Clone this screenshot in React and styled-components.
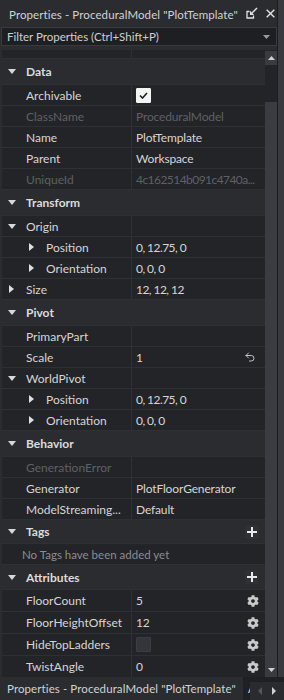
import React from 'react';
import styled, { createGlobalStyle } from 'styled-components';
import { FaCog } from 'react-icons/fa';
import { Undo2 } from 'lucide-react';

const C = {
  strip: '#393a3f',
  frame: '#2b2c30',
  edge: '#1b1c1f',
  rowBg: '#232428',
  headBg: '#2b2c30',
  sep: '#2f3035',
  text: '#d6d6d6',
  dim: '#5f6065',
  note: '#8c8d91',
};

const GlobalStyle = createGlobalStyle`
  html, body { margin: 0; padding: 0; background: ${C.strip}; }
  body {
    font-family: Lato, "Liberation Sans", sans-serif;
    font-size: 12px;
    color: ${C.text};
  }
  #root { width: 284px; height: 700px; }
`;

const Page = styled.div`
  width: 284px;
  height: 700px;
  display: flex;
  flex-direction: column;
  overflow: hidden;
`;

const Top = styled.div`
  flex: 1;
  display: flex;
  min-height: 0;
`;

const Window = styled.div`
  width: 278px;
  box-sizing: border-box;
  border-right: 1px solid ${C.edge};
  background: ${C.frame};
  display: flex;
  flex-direction: column;
`;

const TitleBar = styled.div`
  height: 26px;
  display: flex;
  align-items: center;
  padding: 0 7px 0 9px;
  gap: 8px;
`;

const TitleText = styled.div`
  flex: 1;
  white-space: nowrap;
  color: #d2d2d2;
  font-size: 11.5px;
  letter-spacing: 0.1px;
  padding-top: 2px;
`;

const IconBtn = styled.div`
  display: flex;
  align-items: center;
  justify-content: center;
  width: ${p => p.$w || 12}px;
  height: 12px;
  color: #e2e2e2;
`;

const FilterWrap = styled.div`
  padding: 1px 0 4px 1px;
`;

const FilterBox = styled.div`
  height: 19px;
  box-sizing: border-box;
  border: 1px solid #393a3f;
  background: #1e1f23;
  display: flex;
  align-items: center;
  padding: 0 6px 0 5px;
  color: #cfcfcf;
  font-size: 11.5px;
`;

const FilterText = styled.div`
  flex: 1;
`;

const Body = styled.div`
  flex: 1;
  display: flex;
  min-height: 0;
`;

const List = styled.div`
  flex: 1;
  padding-left: 2px;
  display: flex;
  flex-direction: column;
  overflow: hidden;
`;

const Stub = styled.div`
  height: 9px;
  flex: none;
  display: grid;
  grid-template-columns: 130px 1fr;
  background: ${C.rowBg};
  border-bottom: 1px solid ${C.sep};
  box-sizing: border-box;
  & > div:first-child { border-right: 1px solid ${C.sep}; }
`;

const HeadRow = styled.div`
  height: ${p => p.$h || 26}px;
  flex: none;
  box-sizing: border-box;
  display: flex;
  align-items: center;
  background: ${C.headBg};
  border-bottom: 1px solid ${C.sep};
  font-weight: 700;
  color: #dcdcdc;
  padding-right: 6px;
`;

const HeadLabel = styled.div`
  flex: 1;
`;

const PropRow = styled.div`
  height: ${p => p.$h || 21}px;
  flex: none;
  box-sizing: border-box;
  display: grid;
  grid-template-columns: 130px 1fr;
  background: ${C.rowBg};
  border-bottom: 1px solid ${C.sep};
`;

const NameCell = styled.div`
  display: flex;
  align-items: center;
  padding-left: ${p => p.$depth * 20}px;
  border-right: 1px solid ${C.sep};
  color: ${p => (p.$disabled ? C.dim : C.text)};
  white-space: nowrap;
  overflow: hidden;
`;

const ValueCell = styled.div`
  display: flex;
  align-items: center;
  padding: 0 6px 0 4px;
  gap: 4px;
  color: ${p => (p.$disabled ? C.dim : C.text)};
  white-space: nowrap;
  overflow: hidden;
`;

const ValueText = styled.div`
  flex: 1;
  overflow: hidden;
  letter-spacing: ${p => (p.$tight ? '-0.55px' : '-0.15px')};
`;

const CaretSlot = styled.div`
  width: 18px;
  margin-left: 6px;
  flex: none;
  display: flex;
  align-items: center;
  padding-left: ${p => (p.$right ? 1 : 0)}px;
  box-sizing: border-box;
`;

const NoteRow = styled.div`
  height: 21px;
  flex: none;
  box-sizing: border-box;
  display: flex;
  align-items: center;
  padding-left: 20px;
  background: ${C.rowBg};
  border-bottom: 1px solid ${C.sep};
  color: ${C.note};
  font-size: 11.5px;
`;

const CheckBox = styled.div`
  width: 15px;
  height: 15px;
  box-sizing: border-box;
  border-radius: 1px;
  display: flex;
  align-items: center;
  justify-content: center;
  background: ${p => (p.$on ? '#f4f4f4' : '#34353a')};
  border: 1px solid ${p => (p.$on ? '#f4f4f4' : '#3c3d42')};
`;

const PlusBtn = styled.div`
  width: 14px;
  height: 14px;
  display: flex;
  align-items: center;
  justify-content: center;
  background: #2f3034;
  border-radius: 2px;
`;

const ScrollBar = styled.div`
  width: 12px;
  display: flex;
  flex-direction: column;
  background: ${C.rowBg};
  padding-top: 1px;
`;

const ScrollBtn = styled.div`
  height: 14px;
  flex: none;
  background: #3a3b40;
  display: flex;
  align-items: center;
  justify-content: center;
`;

const Track = styled.div`
  flex: 1;
  display: flex;
  flex-direction: column;
  padding-top: 37px;
`;

const Thumb = styled.div`
  flex: 1;
  background: #3b3c41;
`;

const Strip = styled.div`
  flex: 1;
  background: ${C.strip};
`;

const TabBar = styled.div`
  height: 23px;
  flex: none;
  display: flex;
  background: #1f2023;
  position: relative;
`;

const Tab = styled.div`
  width: ${p => p.$w}px;
  flex: none;
  display: flex;
  align-items: center;
  padding-left: ${p => p.$pad}px;
  box-sizing: border-box;
  background: ${p => (p.$active ? '#2b2c30' : 'transparent')};
  color: #d2d2d2;
  font-size: 11.5px;
  letter-spacing: 0.1px;
  white-space: nowrap;
  overflow: hidden;
`;

const TabArrows = styled.div`
  position: absolute;
  right: 0;
  bottom: 0;
  width: 34px;
  height: 18px;
  background: #2a2b2f;
  display: flex;
  align-items: center;
  justify-content: space-around;
  padding: 0 3px;
  box-sizing: border-box;
`;

const Caret = ({ dir }) =>
  dir === 'down' ? (
    <svg width="8" height="5" viewBox="0 0 8 5"><polygon points="0,0 8,0 4,5" fill="#d8d8d8" /></svg>
  ) : (
    <svg width="5" height="8" viewBox="0 0 5 8"><polygon points="0,0 5,4 0,8" fill="#e0e0e0" /></svg>
  );

const Check = () => (
  <svg width="9" height="7" viewBox="0 0 9 7">
    <polyline points="1,3.5 3.5,6 8,1" fill="none" stroke="#1e1e1e" strokeWidth="1.6" />
  </svg>
);

const Plus = () => (
  <svg width="10" height="10" viewBox="0 0 10 10">
    <rect x="4" y="0" width="2" height="10" fill="#eaeaea" />
    <rect x="0" y="4" width="10" height="2" fill="#eaeaea" />
  </svg>
);

const Undock = () => (
  <svg width="12" height="12" viewBox="0 0 12 12">
    <polyline points="3.5,4.5 1,4.5 1,11 7.5,11 7.5,8.5" fill="none" stroke="#e2e2e2" strokeWidth="1.3" />
    <line x1="11" y1="1" x2="6" y2="6" stroke="#e2e2e2" strokeWidth="1.4" />
    <polygon points="4,8 4,3.8 8.2,8" fill="#e2e2e2" />
  </svg>
);

const Close = () => (
  <svg width="9" height="9" viewBox="0 0 9 9">
    <line x1="0.7" y1="0.7" x2="8.3" y2="8.3" stroke="#e2e2e2" strokeWidth="1.4" />
    <line x1="8.3" y1="0.7" x2="0.7" y2="8.3" stroke="#e2e2e2" strokeWidth="1.4" />
  </svg>
);

const TriSmall = ({ dir, color = '#c8c8c8' }) => {
  const pts = {
    up: '0,4 3.5,0 7,4',
    down: '0,0 7,0 3.5,4',
    left: '4,0 4,8 0,4',
    right: '0,0 4,4 0,8',
  }[dir];
  const vertical = dir === 'up' || dir === 'down';
  return (
    <svg width={vertical ? 7 : 4} height={vertical ? 4 : 8} viewBox={vertical ? '0 0 7 4' : '0 0 4 8'}>
      <polygon points={pts} fill={color} />
    </svg>
  );
};

const sections = [
  {
    title: 'Data',
    rows: [
      { name: 'Archivable', check: true },
      { name: 'ClassName', value: 'ProceduralModel', disabled: true },
      { name: 'Name', value: 'PlotTemplate' },
      { name: 'Parent', value: 'Workspace' },
      { name: 'UniqueId', value: '4c162514b091c4740a...', disabled: true, tight: true },
    ],
  },
  {
    title: 'Transform',
    rows: [
      { name: 'Origin', caret: 'down' },
      { name: 'Position', depth: 1, caret: 'right', value: '0, 12.75, 0', tight: true },
      { name: 'Orientation', depth: 1, caret: 'right', value: '0, 0, 0', tight: true },
      { name: 'Size', caret: 'right', value: '12, 12, 12', tight: true },
    ],
  },
  {
    title: 'Pivot',
    rows: [
      { name: 'PrimaryPart' },
      { name: 'Scale', value: '1', revert: true },
      { name: 'WorldPivot', caret: 'down' },
      { name: 'Position', depth: 1, caret: 'right', value: '0, 12.75, 0', tight: true },
      { name: 'Orientation', depth: 1, caret: 'right', value: '0, 0, 0', tight: true },
    ],
  },
  {
    title: 'Behavior',
    rows: [
      { name: 'GenerationError', disabled: true },
      { name: 'Generator', value: 'PlotFloorGenerator' },
      { name: 'ModelStreaming...', value: 'Default' },
    ],
  },
  {
    title: 'Tags',
    plus: true,
    headH: 24,
    note: 'No Tags have been added yet',
  },
  {
    title: 'Attributes',
    plus: true,
    headH: 25,
    rowH: 22,
    rows: [
      { name: 'FloorCount', value: '5', gear: true },
      { name: 'FloorHeightOffset', value: '12', gear: true },
      { name: 'HideTopLadders', check: false, gear: true },
      { name: 'TwistAngle', value: '0', gear: true },
    ],
  },
];

const Row = ({ r, h }) => (
  <PropRow $h={h}>
    <NameCell $depth={r.depth || 0} $disabled={r.disabled}>
      <CaretSlot $right={r.caret === 'right'}>{r.caret && <Caret dir={r.caret} />}</CaretSlot>
      {r.name}
    </NameCell>
    <ValueCell $disabled={r.disabled}>
      <ValueText $tight={r.tight}>
        {r.check !== undefined ? (
          <CheckBox $on={r.check}>{r.check && <Check />}</CheckBox>
        ) : (
          r.value
        )}
      </ValueText>
      {r.revert && <Undo2 size={12} color="#c4c4c4" strokeWidth={2} style={{ marginRight: 3 }} />}
      {r.gear && <FaCog size={12} color="#c9c9c9" />}
    </ValueCell>
  </PropRow>
);

export default function App() {
  return (
    <Page>
      <GlobalStyle />
      <Top>
        <Window>
          <TitleBar>
            <TitleText>Properties - ProceduralModel "PlotTemplate"</TitleText>
            <IconBtn><Undock /></IconBtn>
            <IconBtn $w={9}><Close /></IconBtn>
          </TitleBar>
          <FilterWrap>
            <FilterBox>
              <FilterText>Filter Properties (Ctrl+Shift+P)</FilterText>
              <TriSmall dir="down" color="#9a9a9a" />
            </FilterBox>
          </FilterWrap>
          <Body>
            <List>
              <Stub><div /><div /></Stub>
              {sections.map(s => (
                <React.Fragment key={s.title}>
                  <HeadRow $h={s.headH}>
                    <CaretSlot><Caret dir="down" /></CaretSlot>
                    <HeadLabel>{s.title}</HeadLabel>
                    {s.plus && <PlusBtn><Plus /></PlusBtn>}
                  </HeadRow>
                  {s.note && <NoteRow>{s.note}</NoteRow>}
                  {s.rows && s.rows.map((r, i) => <Row key={i} r={r} h={s.rowH} />)}
                </React.Fragment>
              ))}
            </List>
            <ScrollBar>
              <ScrollBtn><TriSmall dir="up" color="#d0d0d0" /></ScrollBtn>
              <Track><Thumb /></Track>
              <ScrollBtn><TriSmall dir="down" color="#d0d0d0" /></ScrollBtn>
            </ScrollBar>
          </Body>
        </Window>
        <Strip />
      </Top>
      <TabBar>
        <Tab $active $w={243} $pad={7}>Properties - ProceduralModel "PlotTemplate"</Tab>
        <Tab $w={41} $pad={5}>Asset Manager</Tab>
        <TabArrows>
          <TriSmall dir="left" color="#55565b" />
          <TriSmall dir="right" color="#d0d0d0" />
        </TabArrows>
      </TabBar>
    </Page>
  );
}
